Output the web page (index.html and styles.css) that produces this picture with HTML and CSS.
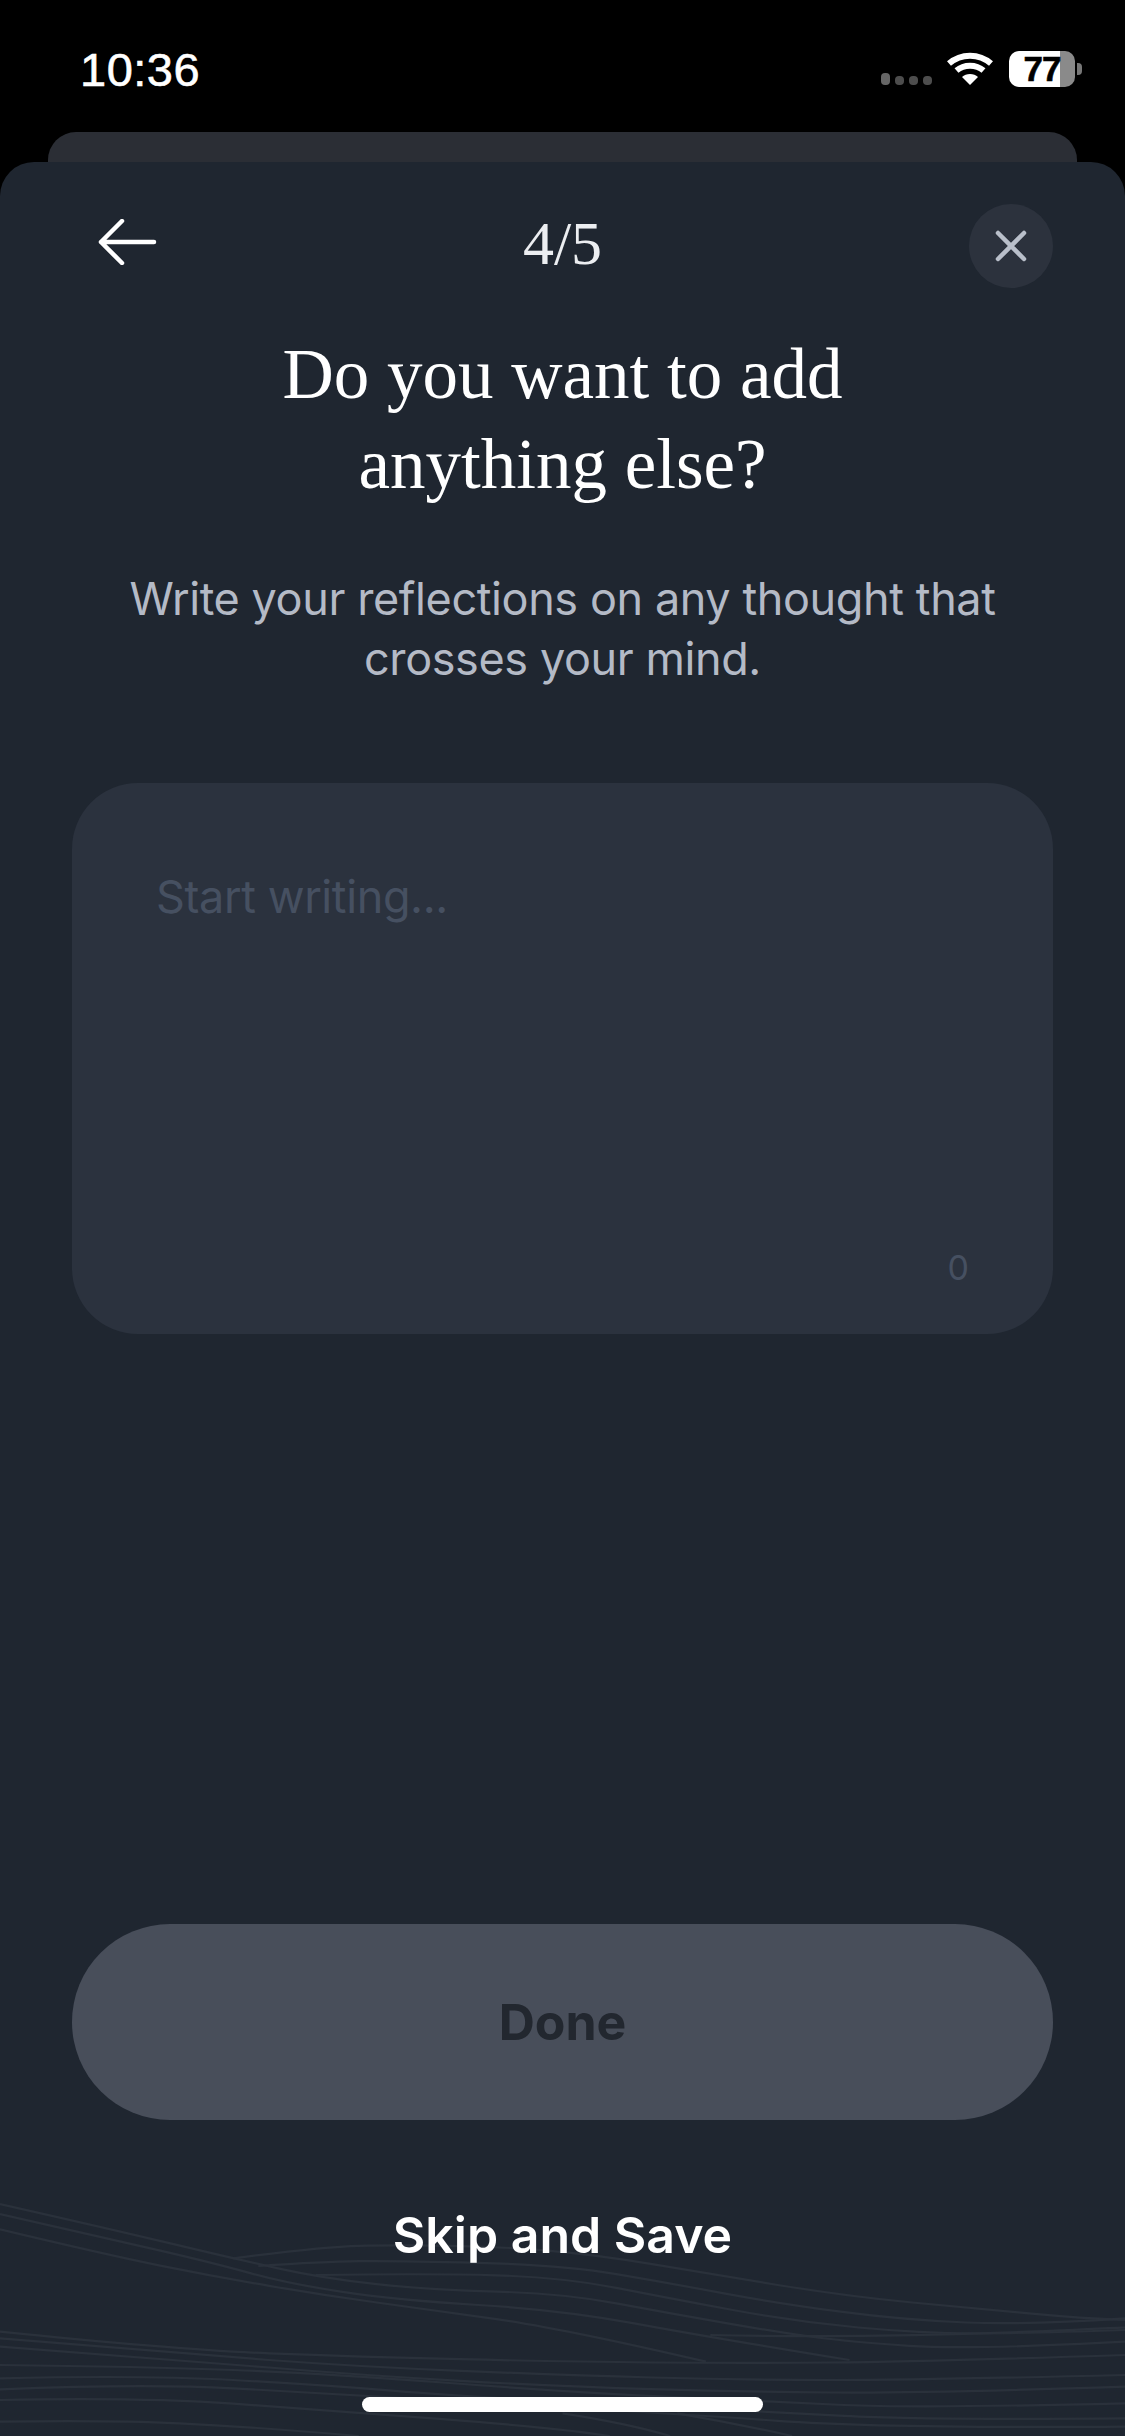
FILE: index.html
```html
<!DOCTYPE html>
<html lang="en">
<head>
<meta charset="utf-8">
<title>Reflection</title>
<link rel="stylesheet" href="styles.css">
</head>
<body>
<div class="phone">
  <header class="status">
    <span class="time">10:36</span>
    <div class="status-icons">
      <div class="signal"><i class="dot tall"></i><i class="dot"></i><i class="dot"></i><i class="dot"></i></div>
      <svg class="wifi" width="46" height="34" viewBox="0 0 46 34"><path d="M2 11.5C14 1 32 1 44 11.5" fill="none" stroke="#fff" stroke-width="6"/><path d="M9.5 18.5C17 12 29 12 36.5 18.5" fill="none" stroke="#fff" stroke-width="6"/><path d="M23 33l-8-8c4-4 12-4 16 0z" fill="#fff"/></svg>
      <div class="battery"><div class="batt-body"><span class="batt-num">77</span></div><i class="batt-tip"></i></div>
    </div>
  </header>
  <div class="backcard"></div>
  <main class="sheet">
    <svg class="waves" width="1125" height="246" viewBox="0 0 3136 738" preserveAspectRatio="none">
      <path d="M650 205Q900 170 1000 167.5Q1100 165 1250 167.5Q1400 170 1534 182.5Q1668 195 1818 222.5Q1968 250 2168 285Q2368 320 2543 337.5Q2718 355 2868 370Q3018 385 3136 390"/>
      <path d="M720 228Q900 215 1000 213.5Q1100 212 1334 218.5Q1568 225 1718 252.5Q1868 280 2018 310Q2168 340 2343 365Q2518 390 2693 397.5Q2868 405 3136 385"/>
      <path d="M880 255Q1200 250 1384 256Q1568 262 1718 293.5Q1868 325 2043 360Q2218 395 2393 412.5Q2568 430 2718 430Q2868 430 3136 420"/>
      <path d="M0 42Q300 115 475 160Q650 205 775 235Q900 265 1050 282.5Q1200 300 1384 305Q1568 310 1718 340Q1868 370 2028 400Q2188 430 2278 442.5Q2368 455 2534 467.5Q2700 480 3136 455"/>
      <path d="M0 72Q300 145 450 182.5Q600 220 700 250Q800 280 950 305Q1100 330 1334 345Q1568 360 1768 400Q1968 440 2368 510"/>
      <path d="M0 118Q300 195 450 227.5Q600 260 750 287.5Q900 315 1050 337.5Q1200 360 1384 387.5Q1568 415 1968 515"/>
      <path d="M1980 435Q2400 445 2868 425T3136 405"/>
      <path d="M0 425Q500 480 750 490Q1000 500 1284 507.5Q1568 515 1818 517.5Q2068 520 2318 517.5Q2568 515 3136 495"/>
      <path d="M0 445Q500 490 750 510Q1000 530 1284 542.5Q1568 555 1818 562.5Q2068 570 2318 570Q2568 570 3136 555"/>
      <path d="M0 470Q500 510 750 532.5Q1000 555 1284 572.5Q1568 590 1818 597.5Q2068 605 2318 607.5Q2568 610 3136 590"/>
      <path d="M0 525Q400 530 650 540Q900 550 1234 577.5Q1568 605 1853 620Q2138 635 2353 645Q2568 655 3136 640"/>
      <path d="M0 565Q400 555 650 570Q900 585 1100 602.5Q1300 620 1719 642.5Q2138 665 2353 677.5Q2568 690 3136 685"/>
      <path d="M0 598Q400 580 650 595Q900 610 1384 640Q1868 670 2168 692.5Q2468 715 3136 710"/>
      <path d="M0 630Q400 622 650 641Q900 660 1234 687.5Q1568 715 1700 738"/>
      <path d="M0 695Q300 690 500 700Q700 710 1000 738"/>
      <path d="M1568 670Q1750 700 1868 738"/>
      <path d="M1888 670Q2050 700 2208 738"/>
    </svg>
    <nav class="topbar">
      <svg class="back" width="60" height="46" viewBox="0 0 60 46" fill="none" stroke="#fff" stroke-width="4.5" stroke-linecap="round" stroke-linejoin="round"><path d="M56 23H3M24 2L3 23l21 21"/></svg>
      <span class="counter">4/5</span>
      <div class="close"><svg width="34" height="34" viewBox="0 0 34 34" fill="none" stroke="#b9bfca" stroke-width="4.5" stroke-linecap="round"><path d="M4 4l26 26M30 4L4 30"/></svg></div>
    </nav>
    <h1 class="title">Do you want to add<br>anything else?</h1>
    <p class="sub">Write your reflections on any thought that crosses your mind.</p>
    <section class="entry">
      <span class="placeholder">Start writing...</span>
      <span class="count">0</span>
    </section>
    <div class="spacer"></div>
    <div class="done">Done</div>
    <div class="skip">Skip and Save</div>
    <div class="home"></div>
  </main>
</div>
</body>
</html>
```
FILE: styles.css
```css
* { box-sizing: border-box; }
html, body { margin: 0; padding: 0; background: #000; }
.phone { width: 1125px; height: 2436px; position: relative; overflow: hidden; background: #000; display: flex; flex-direction: column; font-family: "Inter", "Liberation Sans", sans-serif; }
.status { height: 132px; padding: 47px 43px 0 80px; display: flex; justify-content: space-between; align-items: flex-start; color: #fff; }
.time { font-family: "Liberation Sans", sans-serif; font-size: 47px; line-height: 46px; font-weight: 400; letter-spacing: .5px; -webkit-text-stroke: .6px #fff; }
.status-icons { display: flex; align-items: flex-start; margin-top: 4px; }
.signal { display: flex; align-items: flex-end; gap: 5px; margin-top: 22px; margin-right: 15px; height: 12px; }
.dot { display: block; width: 9px; height: 9px; border-radius: 4px; background: #4d4d4d; }
.dot.tall { height: 12px; background: #666; }
.wifi { margin-right: 16px; margin-top: 1px; }
.battery { display: flex; align-items: center; }
.batt-body { width: 66px; height: 36px; border-radius: 10px; background: linear-gradient(90deg, #fff 0 77%, #8a8a8a 77% 100%); display: flex; align-items: center; justify-content: center; }
.batt-num { font-family: "Liberation Sans", sans-serif; font-weight: 700; font-size: 35px; line-height: 36px; color: #000; letter-spacing: -1px; -webkit-text-stroke: .6px #000; }
.batt-tip { display: block; width: 5px; height: 12px; margin-left: 2px; border-radius: 0 4px 4px 0; background: #777; }
.backcard { position: absolute; left: 48px; right: 48px; top: 132px; height: 60px; background: #2b2e35; border-radius: 28px 28px 0 0; }
.sheet { flex: 1; position: relative; background: #1f2630; margin-top: 30px; border-radius: 34px 34px 0 0; display: flex; flex-direction: column; align-items: center; padding: 0 72px; overflow: hidden; }
.waves { position: absolute; left: 0; bottom: 0; fill: none; }
.waves path { stroke: #2a313b; stroke-width: 2.2; vector-effect: non-scaling-stroke; }
.topbar { width: 100%; height: 84px; margin-top: 42px; display: flex; align-items: center; justify-content: space-between; position: relative; }
.back { margin-left: 26px; margin-top: -8px; }
.counter { font-family: "Liberation Serif", serif; font-size: 62px; line-height: 84px; color: #eceef1; position: absolute; left: 0; right: 0; top: -3px; text-align: center; }
.close { width: 84px; height: 84px; border-radius: 50%; background: #2c323d; display: flex; align-items: center; justify-content: center; }
.title { margin: 41px 0 0; font-family: "Liberation Serif", serif; font-weight: 400; font-size: 71px; line-height: 90px; color: #fff; text-align: center; position: relative; }
.sub { margin: 60px 0 0; width: 900px; font-size: 45px; line-height: 60px; letter-spacing: -.4px; color: #b4bac6; text-align: center; position: relative; }
.entry { margin-top: 94px; width: 100%; height: 551px; border-radius: 66px; background: #2b323e; padding: 84px 84px; position: relative; flex: none; }
.placeholder { font-size: 45px; line-height: 60px; letter-spacing: -.4px; color: #465061; }
.count { position: absolute; right: 84px; bottom: 46px; font-size: 34px; color: #465061; }
.spacer { flex: 1; }
.done { width: 100%; height: 196px; flex: none; border-radius: 98px; background: #484e5a; color: #22272f; font-weight: 700; font-size: 50px; display: flex; align-items: center; justify-content: center; position: relative; }
.skip { margin-top: 82px; font-size: 50px; line-height: 66px; font-weight: 600; color: #fff; position: relative; }
.home { margin: 129px 0 24px; width: 401px; height: 15px; flex: none; border-radius: 8px; background: #fff; position: relative; }
```
